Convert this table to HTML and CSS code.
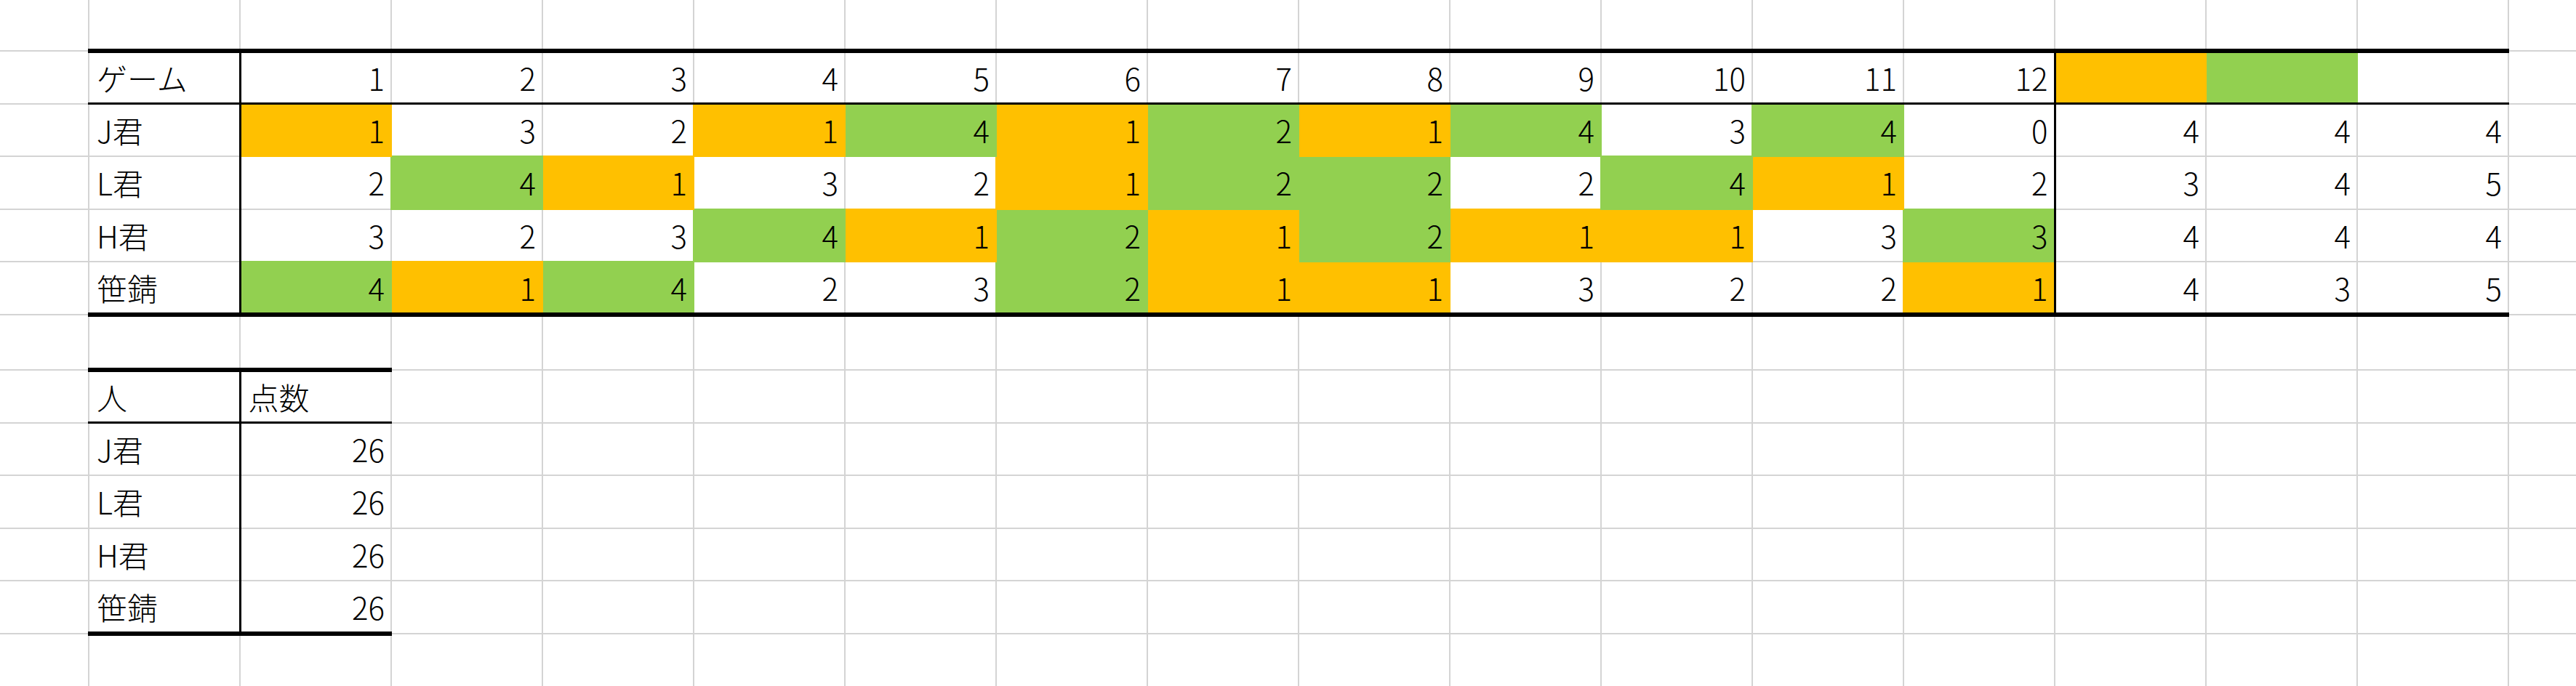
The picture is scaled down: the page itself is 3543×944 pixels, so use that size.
FILE: index.html
```html
<!DOCTYPE html>
<html lang="ja">
<head>
    <meta charset="UTF-8">
    <title>ゲーム 点数</title>
    <link rel="stylesheet" href="styles.css">
</head>
<body>
    <table class="sheet">
        <colgroup>
            <col class="col-a">
            <col><col><col><col><col><col><col><col><col>
            <col><col><col><col><col><col><col><col>
        </colgroup>
        <tbody>
            <tr class="row-top">
                <td></td><td></td><td></td><td></td><td></td><td></td><td></td><td></td><td></td>
                <td></td><td></td><td></td><td></td><td></td><td></td><td></td><td></td><td></td>
            </tr>
            <tr>
                <td></td>
                <td class="edge-top rule-head rule-side">ゲーム</td>
                <td class="num edge-top rule-head">1</td>
                <td class="num edge-top rule-head">2</td>
                <td class="num edge-top rule-head">3</td>
                <td class="num edge-top rule-head">4</td>
                <td class="num edge-top rule-head">5</td>
                <td class="num edge-top rule-head">6</td>
                <td class="num edge-top rule-head">7</td>
                <td class="num edge-top rule-head">8</td>
                <td class="num edge-top rule-head">9</td>
                <td class="num edge-top rule-head">10</td>
                <td class="num edge-top rule-head">11</td>
                <td class="num edge-top rule-head rule-side">12</td>
                <td class="fill-orange edge-top rule-head"></td>
                <td class="fill-green edge-top rule-head"></td>
                <td class="edge-top rule-head"></td>
                <td></td>
            </tr>
            <tr>
                <td></td>
                <td class="rule-side">J君</td>
                <td class="num fill-orange">1</td>
                <td class="num">3</td>
                <td class="num">2</td>
                <td class="num fill-orange">1</td>
                <td class="num fill-green">4</td>
                <td class="num fill-orange">1</td>
                <td class="num fill-green">2</td>
                <td class="num fill-orange">1</td>
                <td class="num fill-green">4</td>
                <td class="num">3</td>
                <td class="num fill-green">4</td>
                <td class="num rule-side">0</td>
                <td class="num">4</td>
                <td class="num">4</td>
                <td class="num">4</td>
                <td></td>
            </tr>
            <tr>
                <td></td>
                <td class="rule-side">L君</td>
                <td class="num">2</td>
                <td class="num fill-green">4</td>
                <td class="num fill-orange">1</td>
                <td class="num">3</td>
                <td class="num">2</td>
                <td class="num fill-orange">1</td>
                <td class="num fill-green">2</td>
                <td class="num fill-green">2</td>
                <td class="num">2</td>
                <td class="num fill-green">4</td>
                <td class="num fill-orange">1</td>
                <td class="num rule-side">2</td>
                <td class="num">3</td>
                <td class="num">4</td>
                <td class="num">5</td>
                <td></td>
            </tr>
            <tr>
                <td></td>
                <td class="rule-side">H君</td>
                <td class="num">3</td>
                <td class="num">2</td>
                <td class="num">3</td>
                <td class="num fill-green">4</td>
                <td class="num fill-orange">1</td>
                <td class="num fill-green">2</td>
                <td class="num fill-orange">1</td>
                <td class="num fill-green">2</td>
                <td class="num fill-orange">1</td>
                <td class="num fill-orange">1</td>
                <td class="num">3</td>
                <td class="num fill-green rule-side">3</td>
                <td class="num">4</td>
                <td class="num">4</td>
                <td class="num">4</td>
                <td></td>
            </tr>
            <tr>
                <td></td>
                <td class="edge-bottom rule-side">笹錆</td>
                <td class="num fill-green edge-bottom">4</td>
                <td class="num fill-orange edge-bottom">1</td>
                <td class="num fill-green edge-bottom">4</td>
                <td class="num edge-bottom">2</td>
                <td class="num edge-bottom">3</td>
                <td class="num fill-green edge-bottom">2</td>
                <td class="num fill-orange edge-bottom">1</td>
                <td class="num fill-orange edge-bottom">1</td>
                <td class="num edge-bottom">3</td>
                <td class="num edge-bottom">2</td>
                <td class="num edge-bottom">2</td>
                <td class="num fill-orange edge-bottom rule-side">1</td>
                <td class="num edge-bottom">4</td>
                <td class="num edge-bottom">3</td>
                <td class="num edge-bottom">5</td>
                <td></td>
            </tr>
            <tr class="row-gap">
                <td></td><td></td><td></td><td></td><td></td><td></td><td></td><td></td><td></td>
                <td></td><td></td><td></td><td></td><td></td><td></td><td></td><td></td><td></td>
            </tr>
            <tr>
                <td></td>
                <td class="edge-top rule-head rule-side">人</td>
                <td class="edge-top rule-head">点数</td>
                <td></td><td></td><td></td><td></td><td></td><td></td><td></td><td></td>
                <td></td><td></td><td></td><td></td><td></td><td></td><td></td>
            </tr>
            <tr>
                <td></td>
                <td class="rule-side">J君</td>
                <td class="num">26</td>
                <td></td><td></td><td></td><td></td><td></td><td></td><td></td><td></td>
                <td></td><td></td><td></td><td></td><td></td><td></td><td></td>
            </tr>
            <tr>
                <td></td>
                <td class="rule-side">L君</td>
                <td class="num">26</td>
                <td></td><td></td><td></td><td></td><td></td><td></td><td></td><td></td>
                <td></td><td></td><td></td><td></td><td></td><td></td><td></td>
            </tr>
            <tr>
                <td></td>
                <td class="rule-side">H君</td>
                <td class="num">26</td>
                <td></td><td></td><td></td><td></td><td></td><td></td><td></td><td></td>
                <td></td><td></td><td></td><td></td><td></td><td></td><td></td>
            </tr>
            <tr>
                <td></td>
                <td class="edge-bottom rule-side">笹錆</td>
                <td class="num edge-bottom">26</td>
                <td></td><td></td><td></td><td></td><td></td><td></td><td></td><td></td>
                <td></td><td></td><td></td><td></td><td></td><td></td><td></td>
            </tr>
            <tr>
                <td></td><td></td><td></td><td></td><td></td><td></td><td></td><td></td><td></td>
                <td></td><td></td><td></td><td></td><td></td><td></td><td></td><td></td><td></td>
            </tr>
        </tbody>
    </table>
</body>
</html>
```

FILE: styles.css
```css
html,
body {
    margin: 0;
    overflow: hidden;
    background-color: #fff;
}

body {
    font-family: "Noto Sans CJK JP", "Noto Sans", sans-serif;
    font-weight: 300;
    color: #000;
}

.sheet {
    border-collapse: collapse;
    table-layout: fixed;
    width: 3658px;
    font-size: 42px;
}

.sheet col {
    width: 208px;
}

.sheet col.col-a {
    width: 122px;
}

.sheet tr {
    height: 72.6px;
}

.sheet tr.row-top {
    height: 70px;
}

.sheet tr.row-gap {
    height: 76px;
}

.sheet td {
    border: 2px solid #d4d4d4;
    padding: 0 8px 0 10px;
    line-height: 1;
    white-space: nowrap;
    overflow: hidden;
    vertical-align: middle;
}

.sheet tr.row-top td {
    border-top: none;
}

.sheet td:first-child {
    border-left: none;
}

.sheet td.num {
    text-align: right;
}

/* fill paints over the grid lines, like in Excel */
.sheet td.fill-orange {
    background-color: #ffc000;
    border: 2px double #ffc000;
}

.sheet td.fill-green {
    background-color: #92d050;
    border: 2px double #92d050;
}

.sheet td.edge-top {
    border-top: 6px solid #000;
}

.sheet td.edge-bottom {
    border-bottom: 6px solid #000;
}

.sheet td.rule-head {
    border-bottom: 3px solid #000;
}

.sheet td.rule-side {
    border-right: 3px solid #000;
}
```
